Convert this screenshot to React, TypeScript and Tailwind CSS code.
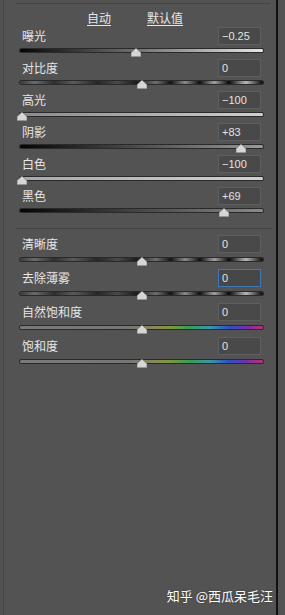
import React from 'react'

type Row = { label: string; value: string; frac: number; track: string; focus?: boolean }

const contrast =
  'bg-[linear-gradient(to_right,#3a3a3a_0%,#6a6a6a_6%,#2e2e2e_14%,#5a5a5a_22%,#262626_32%,#4a4a4a_40%,#1c1c1c_48%,#6e6e6e_56%,#141414_62%,#8a8a8a_68%,#101010_74%,#a0a0a0_80%,#0a0a0a_86%,#b8b8b8_93%,#060606_100%)]'

const basic: Row[] = [
  { label: '曝光', value: '−0.25', frac: 0.475, track: 'bg-[linear-gradient(to_right,#050505,#e6e6e6)]' },
  { label: '对比度', value: '0', frac: 0.5, track: contrast },
  { label: '高光', value: '−100', frac: 0, track: 'bg-[linear-gradient(to_right,#8a8a8a,#d0d0d0)]' },
  { label: '阴影', value: '+83', frac: 0.915, track: 'bg-[linear-gradient(to_right,#050505,#9a9a9a)]' },
  { label: '白色', value: '−100', frac: 0, track: 'bg-[linear-gradient(to_right,#a8a8a8,#d2d2d2)]' },
  { label: '黑色', value: '+69', frac: 0.845, track: 'bg-[linear-gradient(to_right,#050505,#8a8a8a)]' },
]

const rainbow =
  'bg-[linear-gradient(to_right,#7a7a7a_0%,#767676_45%,#8a8a5a_56%,#7a9a3a_62%,#3a9a5a_70%,#3a9aa8_78%,#3050c0_86%,#7030b0_93%,#c0306a_100%)]'

const presence: Row[] = [
  { label: '清晰度', value: '0', frac: 0.5, track: contrast },
  { label: '去除薄雾', value: '0', frac: 0.5, track: contrast, focus: true },
  { label: '自然饱和度', value: '0', frac: 0.5, track: rainbow },
  { label: '饱和度', value: '0', frac: 0.5, track: rainbow },
]

function Thumb({ frac }: { frac: number }) {
  // thumb center runs from 2px to 241px along the track
  const left = 2 + frac * 239 - 5
  return (
    <svg
      width="10"
      height="9"
      viewBox="0 0 10 9"
      className="absolute top-[-1px]"
      style={{ left }}
    >
      <polygon points="5,0 10,4.5 10,9 0,9 0,4.5" fill="#d6d6d6" stroke="#5a5a5a" strokeWidth="0.6" />
      <line x1="0" y1="8.6" x2="10" y2="8.6" stroke="#8a8a8a" strokeWidth="0.8" />
    </svg>
  )
}

function SliderRow({ row, tall }: { row: Row; tall?: boolean }) {
  return (
    <div className={tall ? 'h-[34px] pl-[16px]' : 'h-[32px] pl-[16px]'}>
      <div className="w-[243px] h-[18px] flex items-center justify-between">
        <span className="pl-[2px] text-[12px] leading-[14px] text-[#e6e6e6]">{row.label}</span>
        <div
          className={
            row.focus
              ? 'mr-[2px] w-[43px] h-[18px] bg-[#474747] border border-[#3f78b4] flex items-center pl-[3px]'
              : 'mr-[2px] w-[43px] h-[18px] bg-[#494949] border border-[#5e5e5e] flex items-center pl-[3px]'
          }
        >
          <span className="text-[11px] leading-[12px] text-[#e2e2e2] font-['Liberation_Sans',sans-serif]">
            {row.value}
          </span>
        </div>
      </div>
      <div className={tall ? 'relative mt-[5px] w-[243px] h-[3px]' : 'relative mt-[4px] w-[243px] h-[3px]'}>
        <div className={'w-full h-full rounded-full ring-1 ring-[#2a2a2a] ' + row.track} />
        <Thumb frac={row.frac} />
      </div>
    </div>
  )
}

export default function App() {
  return (
    <div className="w-[285px] h-[615px] bg-[#535353] flex font-['Noto_Sans_CJK_SC',sans-serif] overflow-hidden">
      <div className="w-[3px]" />
      <div className="w-px bg-[#474747]" />
      <div className="w-[272px] flex flex-col">
        <div className="pt-[3px]">
          <div className="ml-[11px] mr-[6px] h-px bg-[#444444]" />
        </div>
        <div className="h-[23px] flex items-end pb-[2px] pl-[83px] gap-[36px] text-[12px] leading-[14px] text-[#e6e6e6]">
          <span className="underline underline-offset-[2px]">自动</span>
          <span className="underline underline-offset-[2px]">默认值</span>
        </div>
        {basic.map((r) => (
          <SliderRow key={r.label} row={r} />
        ))}
        <div className="mt-[9px] ml-[11px] mr-[4px] h-px bg-[#444444]" />
        <div className="h-[6px]" />
        {presence.map((r) => (
          <SliderRow key={r.label} row={r} tall />
        ))}
        <div className="mt-auto pb-[11px] pr-[3px] flex justify-end">
          <span className="text-[13px] leading-[16px] text-white [text-shadow:0_0_2px_rgba(0,0,0,0.4)]">
            知乎 @西瓜呆毛汪
          </span>
        </div>
      </div>
      <div className="w-[2px] bg-[#111111]" />
      <div className="flex-1" />
    </div>
  )
}
